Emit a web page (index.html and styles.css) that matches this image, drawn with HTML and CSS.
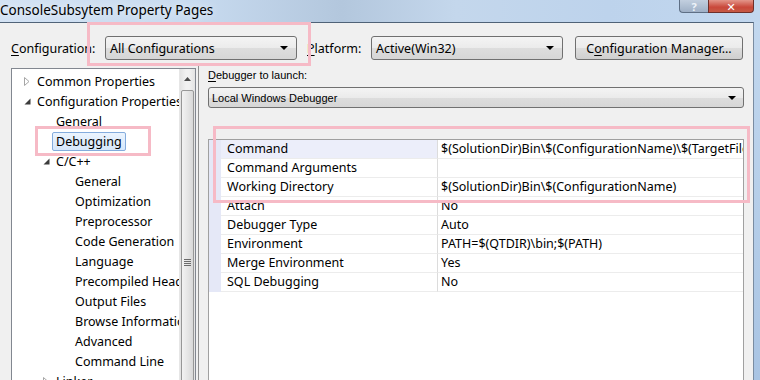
FILE: index.html
```html
<!DOCTYPE html>
<html>
<head>
<meta charset="utf-8">
<link rel="stylesheet" href="styles.css">
</head>
<body>
<div class="titlebar">
  <span class="title">ConsoleSubsytem Property Pages</span>
  <div class="capbtns">
    <div class="cap help">?</div>
    <div class="cap close">✕</div>
  </div>
</div>
<div class="window">
  <div class="toprow">
    <span class="lbl lbl-config"><u>C</u>onfiguration:</span>
    <div class="combo combo-config"><span>All Configurations</span><i class="arrow"></i></div>
    <span class="lbl lbl-platform"><u>P</u>latform:</span>
    <div class="combo combo-platform"><span>Active(Win32)</span><i class="arrow"></i></div>
    <div class="btn">C<u>o</u>nfiguration Manager...</div>
  </div>
  <div class="main">
    <div class="tree">
      <div class="tree-list">
        <div class="ti l0"><span class="tw"><svg width="6" height="9" viewBox="0 0 6 9"><path d="M0.5 0.5 L5 4.5 L0.5 8.5 Z" fill="#fff" stroke="#a6a6a6" stroke-width="1"/></svg></span><span class="tl">Common Properties</span></div>
        <div class="ti l0"><span class="tw"><svg width="7" height="7" viewBox="0 0 7 7"><path d="M6.5 0.5 L6.5 6.5 L0.5 6.5 Z" fill="#3c3c3c"/></svg></span><span class="tl">Configuration Properties</span></div>
        <div class="ti l1"><span class="tw"></span><span class="tl">General</span></div>
        <div class="ti l1"><span class="tw"></span><span class="tl sel">Debugging</span></div>
        <div class="ti l1"><span class="tw"><svg width="7" height="7" viewBox="0 0 7 7"><path d="M6.5 0.5 L6.5 6.5 L0.5 6.5 Z" fill="#3c3c3c"/></svg></span><span class="tl">C/C++</span></div>
        <div class="ti l2"><span class="tw"></span><span class="tl">General</span></div>
        <div class="ti l2"><span class="tw"></span><span class="tl">Optimization</span></div>
        <div class="ti l2"><span class="tw"></span><span class="tl">Preprocessor</span></div>
        <div class="ti l2"><span class="tw"></span><span class="tl">Code Generation</span></div>
        <div class="ti l2"><span class="tw"></span><span class="tl">Language</span></div>
        <div class="ti l2"><span class="tw"></span><span class="tl">Precompiled Headers</span></div>
        <div class="ti l2"><span class="tw"></span><span class="tl">Output Files</span></div>
        <div class="ti l2"><span class="tw"></span><span class="tl">Browse Information</span></div>
        <div class="ti l2"><span class="tw"></span><span class="tl">Advanced</span></div>
        <div class="ti l2"><span class="tw"></span><span class="tl">Command Line</span></div>
        <div class="ti l1"><span class="tw"><svg width="6" height="9" viewBox="0 0 6 9"><path d="M0.5 0.5 L5 4.5 L0.5 8.5 Z" fill="#fff" stroke="#a6a6a6" stroke-width="1"/></svg></span><span class="tl">Linker</span></div>
      </div>
      <div class="vscroll">
        <div class="sc-up"><svg width="7" height="4" viewBox="0 0 7 4"><path d="M0 4 L3.5 0 L7 4 Z" fill="#4d4d4d"/></svg></div>
        <div class="sc-thumb"><div class="grip"></div></div>
      </div>
    </div>
    <div class="panel">
      <div class="dbg-label"><u>D</u>ebugger to launch:</div>
      <div class="combo combo-dbg"><span>Local Windows Debugger</span><i class="arrow"></i></div>
      <div class="grid">
        <div class="row hl"><div class="gut"></div><div class="name">Command</div><div class="val">$(SolutionDir)Bin\$(ConfigurationName)\$(TargetFileName)</div></div>
        <div class="row"><div class="gut"></div><div class="name">Command Arguments</div><div class="val"></div></div>
        <div class="row"><div class="gut"></div><div class="name">Working Directory</div><div class="val">$(SolutionDir)Bin\$(ConfigurationName)</div></div>
        <div class="row"><div class="gut"></div><div class="name">Attach</div><div class="val">No</div></div>
        <div class="row"><div class="gut"></div><div class="name">Debugger Type</div><div class="val">Auto</div></div>
        <div class="row"><div class="gut"></div><div class="name">Environment</div><div class="val">PATH=$(QTDIR)\bin;$(PATH)</div></div>
        <div class="row"><div class="gut"></div><div class="name">Merge Environment</div><div class="val">Yes</div></div>
        <div class="row"><div class="gut"></div><div class="name">SQL Debugging</div><div class="val">No</div></div>
        <div class="grid-rest"></div>
      </div>
    </div>
  </div>
</div>
<div class="note note-config"></div>
<div class="note note-debug"></div>
<div class="note note-grid"></div>
</body>
</html>
```
FILE: styles.css
```css
* { box-sizing: border-box; }
html, body { margin: 0; padding: 0; }
body {
  width: 760px; height: 380px; overflow: hidden; position: relative;
  background: linear-gradient(#c4d9ef, #a9c4e3);
  font-family: "Noto Sans", "DejaVu Sans", sans-serif;
  font-size: 12.5px; color: #000;
}
u { text-decoration: underline; text-underline-offset: 2px; }

.titlebar {
  height: 22px; display: flex; justify-content: space-between; align-items: flex-start;
  background: linear-gradient(90deg, #d3e2f3 0%, #c8dbf0 25%, #b3c7dd 45%, #c4d7ec 60%, #bdd3ec 80%, #c2d7ee 100%);
}
.title { font-size: 13.5px; line-height: 20px; color: #000; text-shadow: 0 0 8px rgba(255,255,255,.9); }
.capbtns { display: flex; margin-right: 6px; }
.cap {
  height: 13px; display: flex; align-items: center; justify-content: center;
  color: #fff; font-size: 11px; line-height: 11px; font-weight: bold;
  border: 1px solid #5e6f85; border-top: none;
}
.help {
  width: 29px; border-radius: 0 0 0 4px; border-right: none;
  background: linear-gradient(#c2cfdf, #9fb0c6); color: #eef3f9;
}
.close {
  width: 46px; border-radius: 0 0 4px 0;
  background: linear-gradient(#e3968a, #c9483a 60%, #c65a45); border-color: #6e2f2a;
}

.window {
  width: 754px; height: 358px; background: #f0f0f0;
  border-top: 1px solid #4f6277; border-right: 1px solid #7a8ca1;
}
.toprow { display: flex; align-items: center; height: 37px; padding: 13px 0 0 11px; }
.lbl { white-space: nowrap; }
.lbl-config { width: 94px; }
.lbl-platform { margin-left: 10px; width: 64px; }
.combo {
  height: 24px; border: 1px solid #707070; border-radius: 3px;
  background: linear-gradient(#f4f4f4, #ebebeb 50%, #dddddd 51%, #d6d6d6);
  display: flex; align-items: center; justify-content: space-between; padding: 0 8px 0 4px;
  white-space: nowrap; overflow: hidden;
}
.arrow { width: 0; height: 0; border-left: 4px solid transparent; border-right: 4px solid transparent; border-top: 4px solid #000; }
.combo-config { width: 192px; }
.combo-platform { width: 192px; }
.btn {
  margin-left: 12px; width: 168px; height: 24px; border: 1px solid #707070; border-radius: 3px;
  background: linear-gradient(#f2f2f2, #ebebeb 50%, #dddddd 51%, #cfcfcf);
  display: flex; align-items: center; justify-content: center; white-space: nowrap;
}

.main { display: flex; margin-top: 8px; align-items: flex-start; }
.tree {
  margin-left: 11px; width: 185px; height: 330px; border: 1px solid #828790; background: #fff;
  display: flex;
}
.tree-list { flex: 1; min-width: 0; padding-top: 2px; overflow: hidden; }
.ti { height: 20px; display: flex; align-items: center; white-space: nowrap; }
.l0 { padding-left: 11px; }
.l1 { padding-left: 30px; }
.l2 { padding-left: 49px; }
.tw { flex: 0 0 14px; width: 14px; height: 20px; display: flex; align-items: center; justify-content: flex-start; padding-left: 1px; }
.tl { flex: 0 0 auto; border: 1px solid transparent; padding: 0 3px; margin-left: -4px; line-height: 17px; }
.tl.sel {
  border-color: #84acdd; border-radius: 2px;
  background: linear-gradient(#ebf4fe, #d6e7fb);
}
.vscroll { flex: 0 0 16px; border-left: 1px solid #e6e6e6; background: linear-gradient(90deg, #e3e3e3, #f1f1f1 40%, #f1f1f1 60%, #e3e3e3); }
.sc-up { height: 19px; display: flex; align-items: center; justify-content: center; }
.sc-thumb {
  margin: 2px 1px 0; height: 320px; border: 1px solid #979797; border-radius: 2px;
  background: linear-gradient(90deg, #f2f2f2, #e6e6e6 50%, #d8d8d8);
  display: flex; justify-content: center; padding-top: 168px;
}
.grip { width: 7px; height: 7px; background: repeating-linear-gradient(#6b6b6b 0 1px, transparent 1px 2px); }

.panel {
  flex: 1; margin-left: 2px; margin-top: -2px; height: 320px;
  border-left: 1px solid #8f8f8f; padding: 3px 10px 0 9px;
}
.dbg-label { font-family: "Liberation Sans", Arial, sans-serif; font-size: 11px; line-height: 13px; height: 15px; }
.combo-dbg {
  width: 536px; height: 21px; margin-top: 3px; font-family: "Liberation Sans", Arial, sans-serif; font-size: 11px;
  padding: 0 7px 0 3px;
}
.grid {
  margin-top: 31px; width: 536px; height: 260px; background: #fff;
  border: 1px solid #a0a0a0; border-bottom: none;
}
.row { display: grid; grid-template-columns: 12px 217px 1fr; height: 19px; }
.gut { background: #e5e8f7; }
.name { padding-left: 6px; line-height: 18px; border-bottom: 1px solid #ececec; border-right: 1px solid #dcdcdc; white-space: nowrap; }
.val { padding-left: 3px; line-height: 18px; border-bottom: 1px solid #ececec; white-space: nowrap; overflow: hidden; }
.row.hl .name { background: #eceefa; }
.grid-rest { height: 110px; background: #fff; }

.note { position: absolute; border: 3px solid #f6bac6; }
.note-config { left: 87px; top: 22px; width: 224px; height: 44px; }
.note-debug { left: 35px; top: 126px; width: 116px; height: 30px; }
.note-grid { left: 213px; top: 126px; width: 537px; height: 77px; }
```
